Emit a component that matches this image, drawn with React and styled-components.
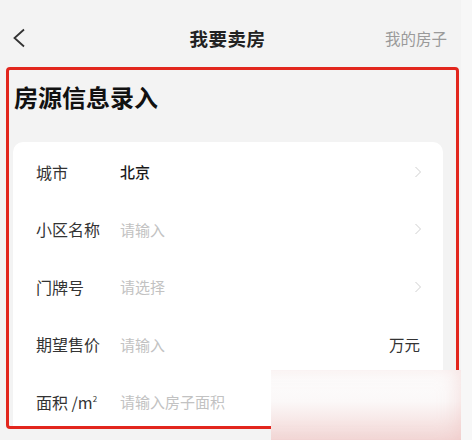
import React from "react";
import styled, { createGlobalStyle } from "styled-components";

const Global = createGlobalStyle`
  html, body { margin: 0; padding: 0; background: #f7f7f7; }
  body { font-family: "Noto Sans CJK SC", "Noto Sans", sans-serif; }
`;

const Page = styled.div`
  position: relative;
  width: 461px;
  height: 440px;
  overflow: hidden;
  background: #f3f3f3;
`;

const Header = styled.header`
  display: grid;
  grid-template-columns: 1fr auto 1fr;
  align-items: center;
  height: 58px;
  padding: 9px 14px 0 12px;
`;

const Back = styled.button`
  justify-self: start;
  display: flex;
  align-items: center;
  padding: 0;
  border: 0;
  background: none;
`;

const HeaderTitle = styled.h1`
  margin: 0 0 0 -4px;
  font-size: 18.5px;
  font-weight: 700;
  color: #222;
  letter-spacing: 0.5px;
`;

const HeaderLink = styled.span`
  justify-self: end;
  font-size: 15.5px;
  color: #9a9a9a;
`;

const Section = styled.section`
  box-sizing: border-box;
  margin-left: 6px;
  width: 453px;
  height: 362px;
  border: 3px solid #e2261d;
  border-radius: 4px;
  overflow: hidden;
`;

const SectionTitle = styled.h2`
  margin: 12px 0 30px 5px;
  font-size: 24px;
  line-height: 30px;
  font-weight: 700;
  color: #111;
`;

const Card = styled.div`
  margin: 0 13px 0 4px;
  padding-top: 1px;
  background: #fff;
  border-radius: 10px 10px 0 0;
`;

const Row = styled.div`
  display: flex;
  align-items: center;
  height: 57.5px;
  padding: 0 21px 0 23px;
`;

const Label = styled.span`
  width: 84px;
  flex: none;
  font-size: 16px;
  color: #333;
`;

const Value = styled.span`
  flex: 1;
  font-size: 15px;
  color: ${(p) => (p.$placeholder ? "#c2c2c2" : "#1a1a1a")};
  font-weight: ${(p) => (p.$placeholder ? 400 : 500)};
`;

const Suffix = styled.span`
  font-size: 15.5px;
  color: #333;
  margin-right: 2px;
`;

const Sup = styled.sup`
  font-size: 8px;
  vertical-align: 7px;
  line-height: 0;
`;

const Blur = styled.div`
  position: absolute;
  left: 271px;
  top: 370px;
  width: 210px;
  height: 70px;
  background: linear-gradient(180deg, #fdfdfd 0%, #fbf8f8 45%, #f6e3e2 80%, #f3dad9 100%);
  box-shadow: inset -26px 0 22px -6px rgba(236, 180, 178, 0.45);
`;

const Chevron = () => (
  <svg width="8" height="12" viewBox="0 0 8 12">
    <path d="M1.5 1 L6.5 6 L1.5 11" fill="none" stroke="#cfcfcf" strokeWidth="1" />
  </svg>
);

const rows = [
  { label: "城市", value: "北京", arrow: true },
  { label: "小区名称", value: "请输入", ph: true, arrow: true },
  { label: "门牌号", value: "请选择", ph: true, arrow: true },
  { label: "期望售价", value: "请输入", ph: true, suffix: "万元" },
  { label: <>面积 /m<Sup>2</Sup></>, value: "请输入房子面积", ph: true },
];

export default function App() {
  return (
    <>
      <Global />
      <Page>
        <Header>
          <Back aria-label="返回">
            <svg width="14" height="20" viewBox="0 0 14 20">
              <path d="M12 1.5 L2.5 10 L12 18.5" fill="none" stroke="#333" strokeWidth="1.8" />
            </svg>
          </Back>
          <HeaderTitle>我要卖房</HeaderTitle>
          <HeaderLink>我的房子</HeaderLink>
        </Header>
        <Section>
          <SectionTitle>房源信息录入</SectionTitle>
          <Card>
            {rows.map((r, i) => (
              <Row key={i}>
                <Label>{r.label}</Label>
                <Value $placeholder={r.ph}>{r.value}</Value>
                {r.suffix && <Suffix>{r.suffix}</Suffix>}
                {r.arrow && <Chevron />}
              </Row>
            ))}
          </Card>
        </Section>
        <Blur />
      </Page>
    </>
  );
}
